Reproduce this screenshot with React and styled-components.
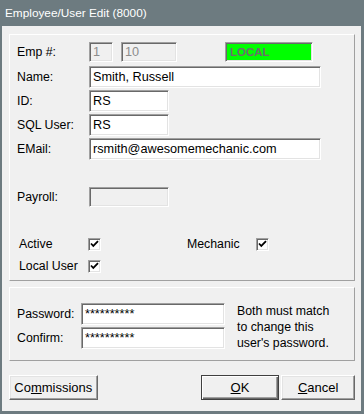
import React from 'react';
import styled, {createGlobalStyle} from 'styled-components';

const GlobalStyle = createGlobalStyle`
  html, body {
    margin: 0;
    padding: 0;
    background: #f0f0f0;
  }
  body {
    font-family: "Liberation Sans", Arial, sans-serif;
    color: #000;
  }
`;

const Window = styled.div`
  width: 364px;
  height: 414px;
  box-sizing: border-box;
  display: flex;
  flex-direction: column;
  border-style: solid;
  border-color: #6d7b80;
  border-width: 0 3px 3px 2px;
  background: #f0f0f0;
`;

const TitleBar = styled.div`
  height: 26px;
  flex: none;
  display: flex;
  align-items: center;
  padding-left: 5px;
  margin: 0 -3px 0 -2px;
  background: #6d7b80;
  color: #fff;
  font-size: 11.8px;
`;

const Body = styled.div`
  flex: 1;
  display: flex;
  flex-direction: column;
  padding: 8px 6px 0 7px;
`;

const Panel = styled.div`
  box-sizing: border-box;
  height: ${p => p.h}px;
  margin-top: ${p => p.mt || 0}px;
  padding: ${p => p.pt}px 7px 0 7px;
  border: 1px solid;
  border-color: #fff #a0a0a0 #a0a0a0 #fff;
  display: flex;
  flex-direction: column;
`;

const Row = styled.div`
  display: flex;
  align-items: center;
  height: ${p => p.h}px;
  margin-top: ${p => p.mt || 0}px;
`;

const Label = styled.span`
  width: ${p => p.w || 72}px;
  flex: none;
  font-size: 12.3px;
  padding-left: ${p => p.pl || 0}px;
  box-sizing: border-box;
  white-space: nowrap;
`;

const TextBox = styled.div`
  box-sizing: border-box;
  width: ${p => p.w}px;
  height: ${p => p.h || 22}px;
  margin-left: ${p => p.ml || 0}px;
  flex: none;
  border: 1px solid;
  border-color: #a0a0a0 #fff #fff #a0a0a0;
  box-shadow: inset 1px 1px 0 #696969, inset -1px -1px 0 #e3e3e3;
  background: ${p => (p.disabled ? '#f0f0f0' : '#fff')};
  color: ${p => (p.disabled ? '#8c8c8c' : '#000')};
  font-size: 12.7px;
  padding: 0 3px;
  display: flex;
  align-items: center;
  white-space: nowrap;
  overflow: hidden;
`;

const StatusBox = styled.div`
  box-sizing: border-box;
  width: 88px;
  height: 20px;
  margin-left: 48px;
  border: 1px solid;
  border-color: #a0a0a0 #fff #fff #a0a0a0;
  box-shadow: inset 1px 1px 0 #696969, inset -1px -1px 0 #e3e3e3;
  background: #00ff00;
  color: #6d6d6d;
  font-size: 11.5px;
  font-weight: bold;
  padding-left: 4px;
  display: flex;
  align-items: center;
`;

const CheckRow = styled.div`
  display: grid;
  grid-template-columns: 71px 99px 69px 13px;
  align-items: center;
  height: 13px;
  margin-top: ${p => p.mt}px;
`;

const CheckBox = styled.span`
  box-sizing: border-box;
  width: 13px;
  height: 13px;
  border: 1px solid;
  border-color: #a0a0a0 #fff #fff #a0a0a0;
  box-shadow: inset 1px 1px 0 #696969, inset -1px -1px 0 #e3e3e3;
  background: #fff;
  display: flex;
  align-items: center;
  justify-content: center;

  svg {
    display: block;
  }
`;

const PwGrid = styled.div`
  display: grid;
  grid-template-columns: 64px 144px 1fr;
  grid-template-rows: 22px 22px;
  row-gap: 2px;
  align-items: center;
`;

const Note = styled.div`
  grid-column: 3;
  grid-row: 1 / span 2;
  align-self: start;
  padding-left: 12px;
  font-size: 12.3px;
  line-height: 16px;
  white-space: nowrap;
`;

const ButtonBar = styled.div`
  display: flex;
  align-items: center;
  margin-top: 14px;
  height: 25px;
`;

const Button = styled.button`
  box-sizing: border-box;
  width: ${p => p.w}px;
  height: 25px;
  margin-left: ${p => p.ml || 0}px;
  padding: 0;
  font-family: "Liberation Sans", Arial, sans-serif;
  font-size: 13px;
  color: #000;
  background: #f0f0f0;
  border: 1px solid;
  border-color: ${p => (p.primary ? '#404040' : '#fff #696969 #696969 #fff')};
  box-shadow: ${p =>
    p.primary
      ? 'inset 1px 1px 0 #fff, inset -1px -1px 0 #696969, inset -2px -2px 0 #a0a0a0'
      : 'inset -1px -1px 0 #a0a0a0, inset 1px 1px 0 #e3e3e3'};
  u {
    text-decoration: underline;
  }
`;

const Check = () => (
  <CheckBox>
    <svg width="9" height="9" viewBox="0 0 9 9">
      <path d="M1 3.5 L3.3 6 L8 1.2" fill="none" stroke="#000" strokeWidth="1.8" />
    </svg>
  </CheckBox>
);

export default function App() {
  return (
    <>
      <GlobalStyle />
      <Window>
        <TitleBar>Employee/User Edit (8000)</TitleBar>
        <Body>
          <Panel h={247} pt={7}>
            <Row h={20}>
              <Label>Emp #:</Label>
              <TextBox w={24} h={20} disabled>1</TextBox>
              <TextBox w={56} h={20} ml={8} disabled>10</TextBox>
              <StatusBox>LOCAL</StatusBox>
            </Row>
            <Row h={22} mt={4}>
              <Label>Name:</Label>
              <TextBox w={232}>Smith, Russell</TextBox>
            </Row>
            <Row h={22} mt={2}>
              <Label>ID:</Label>
              <TextBox w={80}>RS</TextBox>
            </Row>
            <Row h={22} mt={2}>
              <Label>SQL User:</Label>
              <TextBox w={80}>RS</TextBox>
            </Row>
            <Row h={22} mt={2}>
              <Label>EMail:</Label>
              <TextBox w={232}>rsmith@awesomemechanic.com</TextBox>
            </Row>
            <Row h={20} mt={27}>
              <Label>Payroll:</Label>
              <TextBox w={80} h={20} disabled />
            </Row>
            <CheckRow mt={30}>
              <Label w={71} pl={2}>Active</Label>
              <Check />
              <Label w={69}>Mechanic</Label>
              <Check />
            </CheckRow>
            <CheckRow mt={9}>
              <Label w={71} pl={2}>Local User</Label>
              <Check />
            </CheckRow>
          </Panel>
          <Panel h={74} mt={6} pt={15}>
            <PwGrid>
              <Label w={64}>Password:</Label>
              <TextBox w={144}>**********</TextBox>
              <Note>
                Both must match
                <br />
                to change this
                <br />
                user's password.
              </Note>
              <Label w={64}>Confirm:</Label>
              <TextBox w={144}>**********</TextBox>
            </PwGrid>
          </Panel>
          <ButtonBar>
            <Button w={89}>Co<u>m</u>missions</Button>
            <Button w={79} ml={103} primary><u>O</u>K</Button>
            <Button w={74} ml={2}><u>C</u>ancel</Button>
          </ButtonBar>
        </Body>
      </Window>
    </>
  );
}
